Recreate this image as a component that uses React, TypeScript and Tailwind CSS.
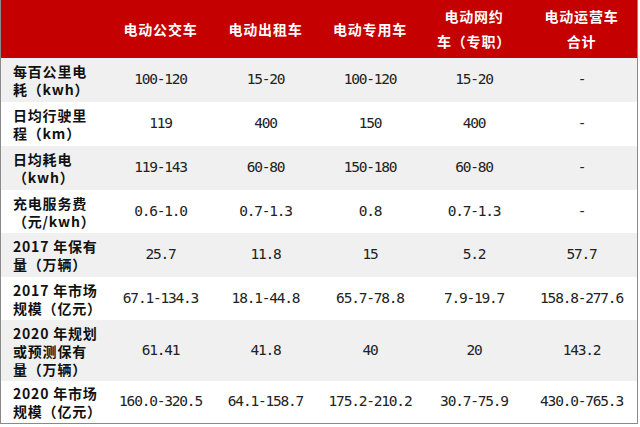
import type { ReactNode } from "react"

// 表格資料：第一欄為指標，後五欄為各車型數值
type Row = { label: ReactNode; values: string[]; h: string; gray: boolean }

const heads: ReactNode[] = [
  "电动公交车",
  "电动出租车",
  "电动专用车",
  <>电动网约<br />车（专职）</>,
  <>电动运营车<br />合计</>,
]

const rows: Row[] = [
  { label: <>每百公里电<br />耗（kwh）</>, values: ["100-120", "15-20", "100-120", "15-20", "-"], h: "h-[44px]", gray: true },
  { label: <>日均行驶里<br />程（km）</>, values: ["119", "400", "150", "400", "-"], h: "h-[44px]", gray: false },
  { label: <>日均耗电<br />（kwh）</>, values: ["119-143", "60-80", "150-180", "60-80", "-"], h: "h-[44px]", gray: true },
  { label: <>充电服务费<br />（元/kwh）</>, values: ["0.6-1.0", "0.7-1.3", "0.8", "0.7-1.3", "-"], h: "h-[43px]", gray: false },
  { label: <>2017 年保有<br />量（万辆）</>, values: ["25.7", "11.8", "15", "5.2", "57.7"], h: "h-[44px]", gray: true },
  { label: <>2017 年市场<br />规模（亿元）</>, values: ["67.1-134.3", "18.1-44.8", "65.7-78.8", "7.9-19.7", "158.8-277.6"], h: "h-[43px]", gray: false },
  { label: <>2020 年规划<br />或预测保有<br />量（万辆）</>, values: ["61.41", "41.8", "40", "20", "143.2"], h: "h-[61px]", gray: true },
  { label: <>2020 年市场<br />规模（亿元）</>, values: ["160.0-320.5", "64.1-158.7", "175.2-210.2", "30.7-75.9", "430.0-765.3"], h: "h-[42px]", gray: false },
]

const font = { fontFamily: '"Noto Sans CJK SC", "Noto Sans", sans-serif' }
const mono = { fontFamily: '"DejaVu Sans Mono", "Noto Sans CJK SC", monospace' }

export default function App() {
  return (
    <div className="w-[640px] h-[427px] bg-white" style={font}>
      <div className="w-[638px] border-x border-b border-[#8a8a8a]">
        {/* 紅色表頭 */}
        <div className="grid grid-cols-[107px_105px_105px_104px_104px_111px] h-[58px] bg-[#c40000]">
          <div />
          {heads.map((h, i) => (
            <div
              key={i}
              className="flex items-center justify-center text-center text-white font-bold text-[14px] leading-[25px] tracking-[0.8px]"
            >
              <span>{h}</span>
            </div>
          ))}
        </div>

        {rows.map((r, i) => (
          <div
            key={i}
            className={`grid grid-cols-[107px_105px_105px_104px_104px_111px] ${r.h} ${r.gray ? "bg-[#f0f0f0]" : "bg-white"}`}
          >
            <div className="flex items-center pl-[12px] font-bold text-[14px] leading-[18px] tracking-[0.8px] text-[#111]">
              <span>{r.label}</span>
            </div>
            {r.values.map((v, j) => (
              <div
                key={j}
                className="flex items-center justify-center text-[14.5px] tracking-[-1.2px] text-[#222]"
                style={mono}
              >
                {v}
              </div>
            ))}
          </div>
        ))}
      </div>
    </div>
  )
}
